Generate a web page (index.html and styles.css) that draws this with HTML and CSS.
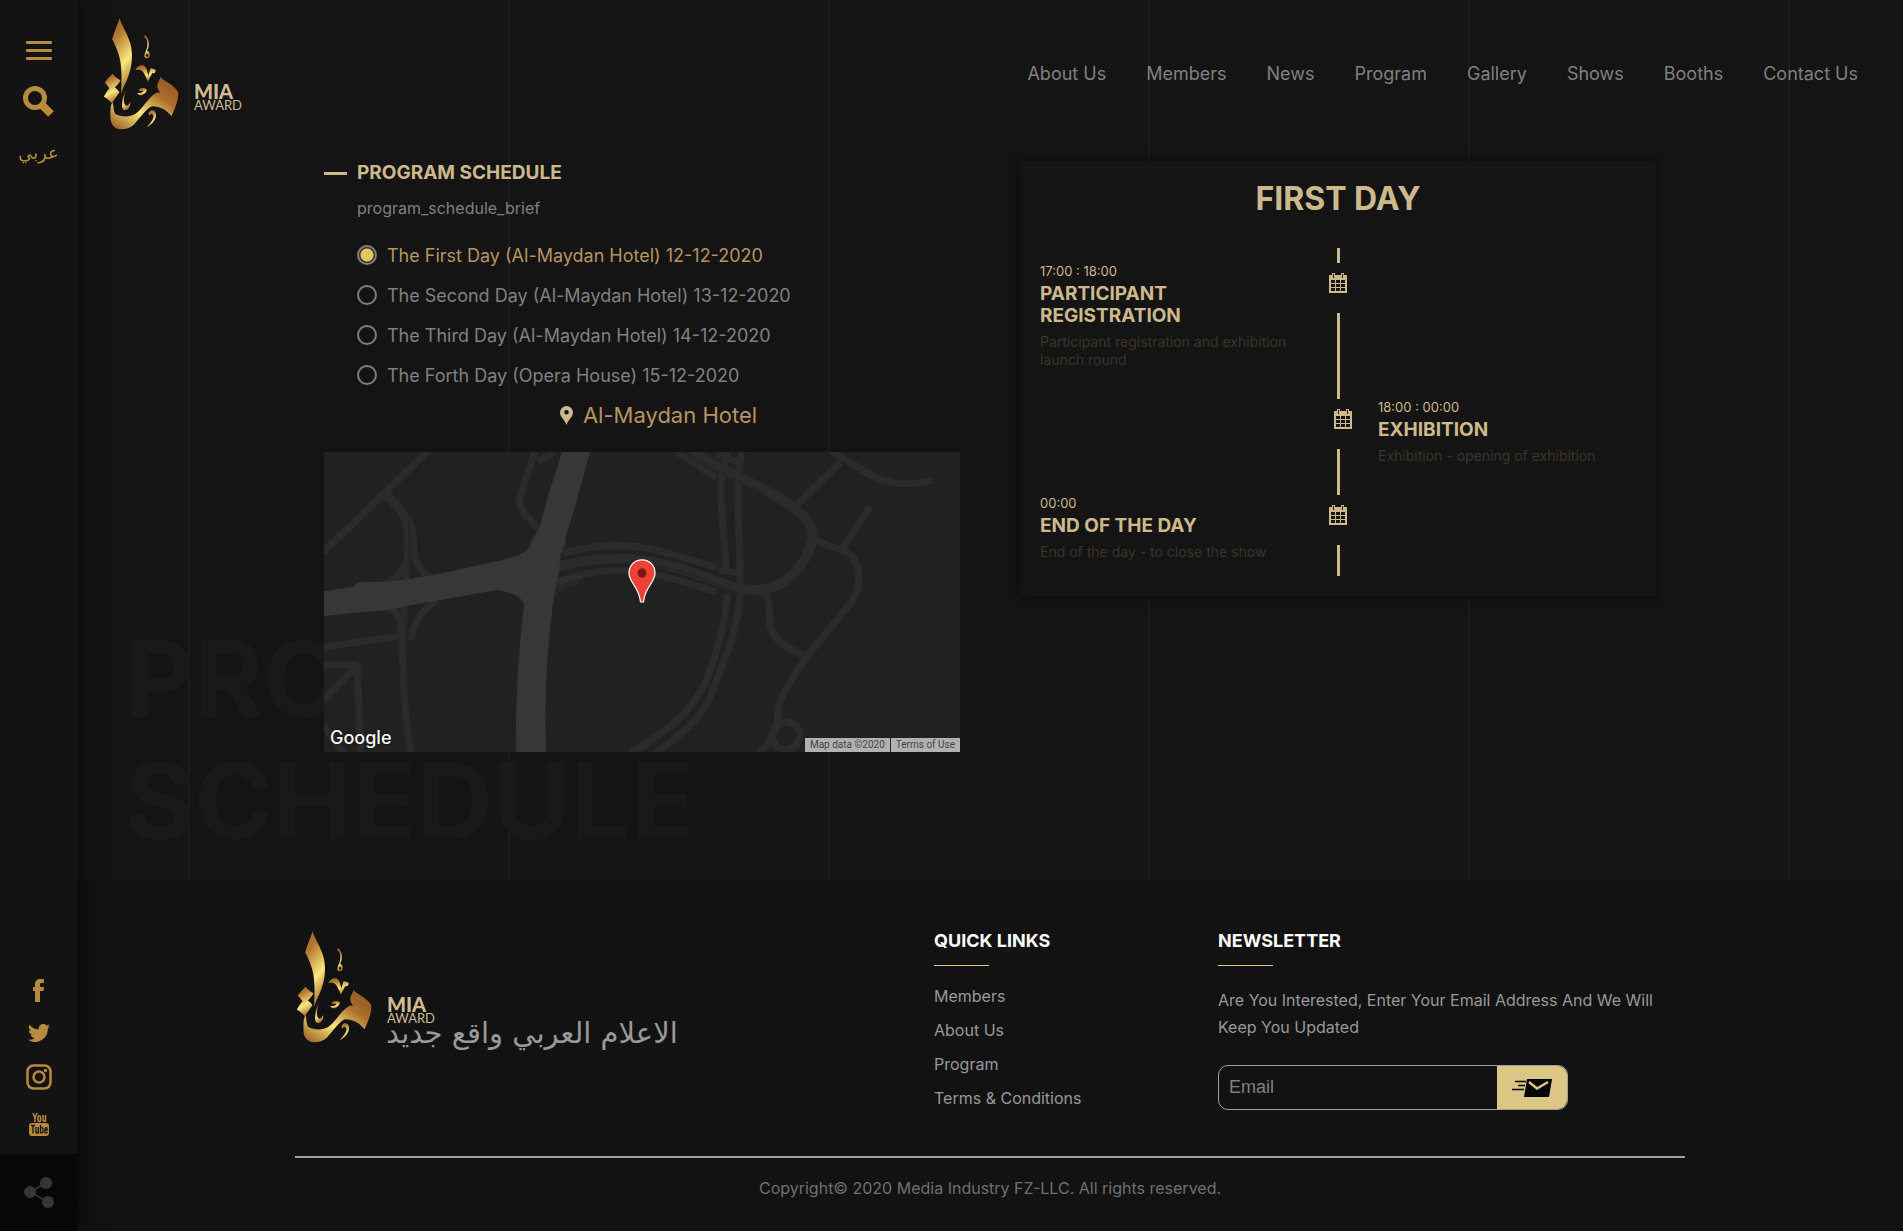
FILE: index.html
```html
<!DOCTYPE html>
<html lang="en">
<head>
<meta charset="utf-8">
<title>MIA Award - Program Schedule</title>
<meta name="viewport" content="width=device-width, initial-scale=1">
<link rel="stylesheet" href="styles.css">
</head>
<body>
<svg class="defs" aria-hidden="true">
  <defs>
    <linearGradient id="goldA" x1="0.3" y1="0" x2="0.6" y2="1">
      <stop offset="0" stop-color="#a0652a"/><stop offset="0.2" stop-color="#b17a33"/><stop offset="0.62" stop-color="#fbe77c"/><stop offset="1" stop-color="#a0652a"/>
    </linearGradient>
    <linearGradient id="goldB" x1="0.1" y1="1" x2="0.85" y2="0.2">
      <stop offset="0" stop-color="#a0652a"/><stop offset="0.42" stop-color="#fbe77c"/><stop offset="0.8" stop-color="#ad712d"/><stop offset="1" stop-color="#9c6028"/>
    </linearGradient>
    <symbol id="logo-mark" viewBox="309 50 230 345">
      <path fill="url(#goldA)" d="M358 54C364 75 384 103 392 135C399 168 396 204 379 242C372 256 367 266 364 281C362 262 366 240 363 205C361 166 348 142 336 117C342 94 352 76 358 54Z"/>
      <path fill="url(#goldA)" d="M337 220C344 228 352 235 361 240C356 250 350 256 344 261C350 267 355 271 358 276C350 287 343 297 335 309C328 300 320 294 311 289C316 279 322 271 328 264C323 257 319 252 314 247C320 236 329 229 337 220Z"/>
      <path fill="url(#goldB)" d="M481 230C492 244 522 252 534 276C536 300 524 325 514 348C500 331 482 318 455 318C437 326 420 353 401 373C391 382 377 387 363 387C343 386 331 372 331 352C331 335 329 318 337 306C341 316 339 331 345 340C362 351 390 350 404 342C426 327 442 295 463 281C468 277 475 276 480 277C472 266 470 259 472 252C474 243 480 238 481 230Z"/>
      <path fill="url(#goldA)" d="M380 267C371 282 370 299 373 311C378 319 384 318 390 305C391 314 388 325 378 329C367 331 365 321 366 310C366 294 371 279 380 267Z"/>
      <path fill="url(#goldA)" d="M405 209C412 195 427 191 435 199C441 207 443 217 444 227C447 218 449 208 452 202C456 207 462 202 467 211C464 217 461 222 457 217C452 226 447 235 443 244C438 231 433 220 427 213C419 206 412 208 405 209Z"/>
      <path fill="url(#goldA)" d="M412 277C423 279 429 276 430 271C424 271 419 272 415 270C420 263 433 260 440 268C438 276 432 284 421 285C416 284 413 281 412 277Z"/>
      <path fill="url(#goldA)" d="M434 104C441 109 447 120 446 135C445 143 442 148 441 152C449 154 451 162 447 171C441 177 431 174 433 165C434 157 439 149 441 140C443 127 440 114 432 110ZM439 160C435 164 437 170 442 169C446 166 444 159 439 160Z"/>
      <path fill="url(#goldA)" d="M449 345C442 343 445 333 454 330C465 329 469 339 467 350C462 367 450 376 439 381C449 370 459 360 460 348C457 338 452 339 449 345Z"/>
    </symbol>
    <symbol id="calendar" viewBox="0 0 18 20">
      <path fill="#cdb98c" d="M0 2h3V0h3v2h6V0h3v2h3v18H0z"/>
      <path fill="#141414" d="M2 7h14v11H2zM4 1h1v4H4zM13 1h1v4h-1z"/>
      <path stroke="#cdb98c" fill="none" d="M6.500 7v11M11.500 7v11M2 10.500h14M2 14.500h14"/>
    </symbol>
  </defs>
</svg>

<aside class="sidebar">
  <div class="tools">
    <button class="icon-btn" aria-label="Menu"><svg width="26" height="19" viewBox="0 0 26 19" fill="currentColor"><rect width="26" height="3" rx="1"/><rect y="8" width="26" height="3" rx="1"/><rect y="16" width="26" height="3" rx="1"/></svg></button>
    <button class="icon-btn" aria-label="Search"><svg width="31" height="31" viewBox="0 0 31 31" fill="none" stroke="currentColor"><circle cx="12" cy="12" r="9.500" stroke-width="5"/><path d="M18 18l10 10" stroke-width="8"/></svg></button>
    <a class="lang" href="#" lang="ar">عربي</a>
  </div>
  <div class="social">
    <a href="#" aria-label="Facebook"><svg width="11" height="23" viewBox="0 0 11 23" fill="currentColor"><path d="M11 0v4H9C7.500 4 7 4.500 7 5.500V8h4l-.5 4H7v11H2V12H0V8h2V5C2 2 4 0 7 0z"/></svg></a>
    <a href="#" aria-label="Twitter"><svg width="22" height="18" viewBox="0 0 22 18" fill="currentColor"><path d="M22 2.100a9 9 0 0 1-2.600.7A4.500 4.500 0 0 0 21.400.3a9 9 0 0 1-2.900 1.100A4.500 4.500 0 0 0 10.800 5.500 12.800 12.800 0 0 1 1.500.8a4.500 4.500 0 0 0 1.400 6 4.500 4.500 0 0 1-2-.6 4.500 4.500 0 0 0 3.600 4.500 4.500 4.500 0 0 1-2 .1 4.500 4.500 0 0 0 4.200 3.100A9 9 0 0 1 0 15.800 12.800 12.800 0 0 0 19.800 4.400 9 9 0 0 0 22 2.100z"/></svg></a>
    <a href="#" aria-label="Instagram"><svg width="26" height="26" viewBox="0 0 26 26" fill="none" stroke="currentColor" stroke-width="2.500"><rect x="1.500" y="1.500" width="23" height="23" rx="6"/><circle cx="13" cy="13" r="5.500"/><circle cx="19.500" cy="6.500" r="1" stroke-width="1.500"/></svg></a>
    <a href="#" aria-label="YouTube"><svg width="20" height="24" viewBox="0 0 20 24" fill="none" stroke="currentColor" stroke-width="1.500"><path d="M4 1l2 5 2-5M6 5v5"/><rect x="9" y="4" width="2.500" height="5.500" rx="1"/><path d="M14 3v5.500q0 1 2.500 0M16.500 3v7"/><rect y="11" width="20" height="13" rx="3" fill="currentColor" stroke="none"/><g stroke="#131313" stroke-width="1.300"><path d="M2 13.500h4M4 13.500v8M7 15v5.500q0 1 2 0M9.300 15v6.500M11.500 13v8.500M11.500 16q2.500-1 2.500 1v3q0 1.500-2.500.5M18 19.500v1q-2 1.500-2-.5v-3q0-2 2-1v2h-2"/></g></svg></a>
  </div>
  <button class="share" aria-label="Share"><svg width="30" height="31" viewBox="0 0 30 31" fill="#363636"><path d="M6 15l16-9M6 15l18 10" stroke="#363636" stroke-width="1.500"/><circle cx="6" cy="15" r="6"/><circle cx="22" cy="6" r="6"/><circle cx="24" cy="25" r="6"/></svg></button>
</aside>

<div class="page">
  <header class="header">
    <a class="logo" href="#" aria-label="MIA Award">
      <svg class="logo-mark"><use href="#logo-mark"/></svg>
      <span class="logo-text"><strong>MIA</strong><span>AWARD</span></span>
    </a>
    <nav class="nav">
      <a href="#">About Us</a><a href="#">Members</a><a href="#">News</a><a href="#">Program</a><a href="#">Gallery</a><a href="#">Shows</a><a href="#">Booths</a><a href="#">Contact Us</a>
    </nav>
  </header>

  <main class="main">
    <div class="ghost" aria-hidden="true">PROGRAM<br>SCHEDULE</div>
    <div class="columns">
      <section class="schedule">
        <h1>PROGRAM SCHEDULE</h1>
        <p class="brief">program_schedule_brief</p>
        <div class="days">
          <label><input type="radio" name="day" checked><span>The First Day (Al-Maydan Hotel) 12-12-2020</span></label>
          <label><input type="radio" name="day"><span>The Second Day (Al-Maydan Hotel) 13-12-2020</span></label>
          <label><input type="radio" name="day"><span>The Third Day (Al-Maydan Hotel) 14-12-2020</span></label>
          <label><input type="radio" name="day"><span>The Forth Day (Opera House) 15-12-2020</span></label>
        </div>
        <p class="venue"><svg width="13" height="19" viewBox="0 0 13 19"><path fill="#cdb98c" fill-rule="evenodd" d="M6.500 0A6.500 6.500 0 0 1 13 6.500C13 11 8 14 6.500 19 5 14 0 11 0 6.500A6.500 6.500 0 0 1 6.500 0zm0 4a2.300 2.300 0 1 0 0 4.600 2.300 2.300 0 0 0 0-4.600z"/></svg>Al-Maydan Hotel</p>
        <div class="map">
          <svg class="roads" viewBox="33 36 1511 900" preserveAspectRatio="none" aria-hidden="true">
            <g class="minor">
              <path d="M280 32L30 338M175 168C215 200 232 235 232 300C232 380 225 440 222 540C215 700 225 830 240 940M182 162C225 215 246 250 246 310C245 370 262 400 300 420M228 370C215 410 195 425 175 434M170 500C215 505 215 540 215 590M300 480C260 520 245 545 240 600M30 622L212 588M30 674H108Q113 674 113 690L120 940M110 680L30 780M30 855L80 940"/>
              <path d="M535 32L500 165Q492 200 512 225L548 272M580 36L540 65"/>
              <path d="M870 36C910 65 930 90 965 112M1235 30C1290 70 1330 110 1370 124C1405 136 1440 132 1478 122"/>
              <path d="M990 36L976 125C974 220 985 300 989 400M1025 36L1017 100C1013 220 1022 320 1022 440M992 460C985 560 965 650 935 740C895 830 830 890 760 940M1021 460C1020 560 985 660 950 770C925 850 860 900 820 940"/>
              <path d="M600 340C680 310 760 312 830 332L965 382M590 425C640 400 700 390 750 392C830 398 890 428 965 455M970 390L1025 400M965 42L1025 70"/>
              <path d="M1260 65L1152 200M1332 200L1262 330M1198 300L1262 330C1310 350 1312 420 1290 480L1180 650C1130 740 1110 780 1110 840C1110 870 1090 910 1065 940M1080 455C1102 500 1080 540 1100 580C1120 620 1150 630 1178 650M1130 846C1175 850 1175 925 1130 929C1090 925 1085 860 1130 846"/>
            </g>
            <path class="medium" d="M900 30C990 105 1100 150 1150 205C1190 245 1195 265 1193 300C1180 370 1130 450 1060 450C990 455 930 385 780 360C710 350 650 360 590 380"/>
            <path class="casing" d="M890 36C960 90 1010 120 1080 160M600 398C700 355 800 370 870 392C940 415 990 450 1020 458M236 180V400M226 530V640M1007 110V400"/>
            <path fill="#373737" d="M598 36H665L625 220L607 290V310L596 340L590 410L579 470C565 620 557 720 560 936H489C488 780 495 630 508 495C502 465 470 455 443 450L230 498C190 510 150 515 120 517L33 528V454L105 440Q108 426 125 426C230 430 340 390 460 360C490 345 520 345 526 300L543 270L565 170Z"/>
            <path fill="#373737" d="M590 410L650 405C640 440 620 435 605 445L579 470Z" opacity="0.3"/>
          </svg>
          <svg class="pin" width="28" height="44" viewBox="0 0 28 44"><path fill="#ea4335" stroke="#fff" stroke-width="1.200" d="M14 .8C21.500.8 27 6.500 27 14C27 24 17 27 15.500 43H12.500C11 27 1 24 1 14C1 6.500 6.500.8 14 .8Z"/><circle cx="14" cy="14" r="4.500" fill="#811411"/></svg>
          <span class="google">Google</span>
          <div class="terms"><span>Map data ©2020</span><a href="#">Terms of Use</a></div>
        </div>
      </section>

      <section class="card">
        <h2>FIRST DAY</h2>
        <div class="timeline">
          <article class="event">
            <div class="event-body"><time>17:00 : 18:00</time><h3>PARTICIPANT REGISTRATION</h3><p>Participant registration and exhibition launch round</p></div>
            <div class="marker"><svg width="18" height="20"><use href="#calendar"/></svg></div>
          </article>
          <article class="event event-right">
            <div class="marker"><svg width="18" height="20"><use href="#calendar"/></svg></div>
            <div class="event-body"><time>18:00 : 00:00</time><h3>EXHIBITION</h3><p>Exhibition - opening of exhibition</p></div>
          </article>
          <article class="event">
            <div class="event-body"><time>00:00</time><h3>END OF THE DAY</h3><p>End of the day - to close the show</p></div>
            <div class="marker"><svg width="18" height="20"><use href="#calendar"/></svg></div>
          </article>
        </div>
      </section>
    </div>
  </main>

  <footer class="footer">
    <div class="footer-inner">
      <div class="footer-grid">
        <div class="brand">
          <a class="logo" href="#" aria-label="MIA Award">
            <svg class="logo-mark"><use href="#logo-mark"/></svg>
            <span class="logo-text"><strong>MIA</strong><span>AWARD</span></span>
          </a>
          <p class="slogan" lang="ar" dir="rtl">الاعلام العربي واقع جديد</p>
        </div>
        <div class="links">
          <h4>QUICK LINKS</h4>
          <ul>
            <li><a href="#">Members</a></li>
            <li><a href="#">About Us</a></li>
            <li><a href="#">Program</a></li>
            <li><a href="#">Terms &amp; Conditions</a></li>
          </ul>
        </div>
        <div class="newsletter">
          <h4>NEWSLETTER</h4>
          <p>Are You Interested, Enter Your Email Address And We Will Keep You Updated</p>
          <form class="subscribe">
            <input type="email" placeholder="Email" aria-label="Email">
            <button type="button" aria-label="Subscribe"><svg width="40" height="20" viewBox="0 0 40 20"><path fill="#000" d="M15 1h25l-3 18H12z"/><path fill="none" stroke="#dcc684" stroke-width="2.500" d="M17 4l8 6.500 11-6.500"/><path stroke="#000" stroke-width="1.500" d="M3 3.500h11M6 7.500h7M0 11.500h12"/></svg></button>
          </form>
        </div>
      </div>
      <p class="copyright">Copyright© 2020 Media Industry FZ-LLC. All rights reserved.</p>
    </div>
  </footer>
</div>
</body>
</html>
```
FILE: styles.css
```css
* { box-sizing: border-box; }

body {
  margin: 0;
  background: #121212;
  color: #808080;
  font-family: Inter, "DejaVu Sans", sans-serif;
  font-size: 16px;
}

h1, h2, h3, h4, p, ul { margin: 0; padding: 0; }
ul { list-style: none; }
a { color: inherit; text-decoration: none; }
button { border: 0; padding: 0; background: none; color: inherit; cursor: pointer; }
svg { display: block; }
.defs { position: absolute; width: 0; height: 0; }

/* Sidebar */
.sidebar {
  position: fixed;
  inset: 0 auto 0 0;
  z-index: 2;
  width: 77px;
  display: flex;
  flex-direction: column;
  background: #131313;
  box-shadow: 0 0 30px rgba(0, 0, 0, 0.7);
  color: #b88a3d;
}
.tools {
  flex: 1;
  display: flex;
  flex-direction: column;
  align-items: center;
  gap: 26px;
  padding-top: 41px;
}
.lang { font: 18px/20px "DejaVu Sans", sans-serif; }
.social {
  display: flex;
  flex-direction: column;
  align-items: center;
  gap: 22px;
  padding-bottom: 18px;
}
.share {
  height: 77px;
  display: grid;
  place-items: center;
  background: #070707;
}

/* Page */
.page { margin-left: 77px; }
.header, .main {
  background: repeating-linear-gradient(90deg, #141414 0 111px, #1b1b1b 111px 113px, #141414 113px 320px);
}
.header {
  display: flex;
  align-items: center;
  justify-content: space-between;
  height: 148px;
  padding: 0 45px 0 26px;
}
.logo { display: flex; align-items: flex-end; gap: 14px; }
.logo-mark { width: 77px; height: 115px; }
.logo-text {
  display: flex;
  flex-direction: column;
  padding-bottom: 21px;
  color: #cdbb92;
  font: 13px/12px Lato, sans-serif;
}
.logo-text strong { font-size: 20px; line-height: 16px; font-weight: 900; }
.nav { display: flex; flex-wrap: wrap; gap: 40px; font-size: 18px; line-height: 24px; }

.main { position: relative; padding: 13px 60px 128px; }
.ghost {
  position: absolute;
  left: 48px;
  bottom: 18px;
  color: #191919;
  font-size: 106px;
  line-height: 122px;
  font-weight: 700;
}
.columns {
  position: relative;
  max-width: 1332px;
  margin: 0 auto;
  display: grid;
  grid-template-columns: 1fr 1fr;
  gap: 60px;
  align-items: start;
}

/* Schedule column */
.schedule h1 {
  display: flex;
  align-items: center;
  gap: 10px;
  color: #cdb98c;
  font-size: 19px;
  line-height: 24px;
}
.schedule h1::before { content: ""; width: 23px; height: 3px; background: #cdb98c; }
.brief { padding: 12px 0 0 33px; line-height: 22px; }
.days { display: grid; padding: 16px 0 0 33px; }
.days label {
  display: flex;
  align-items: center;
  gap: 10px;
  height: 40px;
  font-size: 18px;
}
.days input {
  appearance: none;
  width: 20px;
  height: 20px;
  margin: 0;
  border: 2px solid #808080;
  border-radius: 50%;
}
.days input:checked { background: radial-gradient(circle, #e3c565 6px, #333 7px); }
.days input:checked + span { color: #b8935f; }
.venue {
  display: flex;
  justify-content: center;
  align-items: center;
  gap: 10px;
  padding: 6px 0 23px 33px;
  color: #b8935f;
  font-size: 22px;
  line-height: 28px;
}
.map { position: relative; height: 300px; background: #212121; overflow: hidden; }
.roads { width: 100%; height: 100%; }
.roads path { vector-effect: non-scaling-stroke; }
.minor, .medium { fill: none; stroke: #2b2b2b; stroke-width: 7px; }
.medium { stroke-width: 10px; }
.casing { fill: none; stroke: #222; stroke-width: 1px; }
.pin { position: absolute; left: calc(50% - 14px); top: 107px; }
.google {
  position: absolute;
  left: 6px;
  bottom: 1px;
  color: #fff;
  font-size: 18px;
  line-height: 26px;
  font-weight: 500;
  text-shadow: 0 0 2px #000;
}
.terms {
  position: absolute;
  right: 0;
  bottom: 0;
  display: flex;
  gap: 1px;
  color: #444;
  font: 10px/14px Roboto, sans-serif;
}
.terms > * { padding: 0 5px; background: #b1b1b1; }

/* Day card */
.card {
  padding: 20px;
  background: #141414;
  box-shadow: 0 0 10px rgba(0, 0, 0, 0.6);
  color: #cdb98c;
}
.card h2 { font-size: 32px; line-height: 36px; text-align: center; }
.timeline {
  margin-top: 31px;
  padding: 15px 0;
  background: linear-gradient(#cdb98c, #cdb98c) center / 3px 100% no-repeat;
}
.event { display: flex; justify-content: space-between; margin-bottom: 30px; }
.event:last-child { margin-bottom: 0; }
.event-body { width: 258px; }
.event .marker { margin-right: 279px; }
.event-right { justify-content: flex-start; }
.event-right .marker { margin: 0 16px 0 calc(50% - 14px); }
.marker {
  width: 38px;
  height: 50px;
  display: flex;
  justify-content: center;
  padding-top: 10px;
  background: #141414;
}
.event time { display: block; font-size: 13px; line-height: 16px; }
.event h3 { margin: 4px 0 6px; font-size: 19px; line-height: 22px; }
.event p { color: #3b352c; font-size: 14px; line-height: 18px; }

/* Footer */
.footer { padding: 48px 60px 32px; background: #121212; }
.footer-inner { max-width: 1390px; margin: 0 auto; }
.footer-grid {
  display: grid;
  grid-template-columns: 639fr 284fr 467fr;
  padding-bottom: 41px;
  border-bottom: 2px solid #a0a0a0;
  color: #999;
}
.brand { padding-top: 2px; }
.brand .logo { margin-left: 1px; }
.slogan {
  width: max-content;
  margin: -28px 0 0 91px;
  font: 29px/32px "DejaVu Sans", sans-serif;
}
.footer h4 {
  color: #fff;
  font-size: 18px;
  line-height: 26px;
}
.footer h4::after { content: ""; display: block; width: 55px; height: 1px; margin-top: 11px; background: #dcc684; }
.links ul { padding-top: 13px; line-height: 34px; }
.newsletter p { padding: 21px 0 24px; line-height: 27px; }
.subscribe {
  width: 350px;
  height: 45px;
  display: flex;
  border: 1px solid #a0a0a0;
  border-radius: 10px;
  overflow: hidden;
}
.subscribe input {
  flex: 1;
  min-width: 0;
  border: 0;
  padding: 0 10px;
  background: transparent;
  color: #999;
  font: 18px "Liberation Sans", sans-serif;
}
.subscribe input::placeholder { color: #808080; }
.subscribe button { width: 70px; display: grid; place-items: center; background: #dcc684; }
.copyright { padding-top: 18px; line-height: 24px; text-align: center; color: #707070; }
```
